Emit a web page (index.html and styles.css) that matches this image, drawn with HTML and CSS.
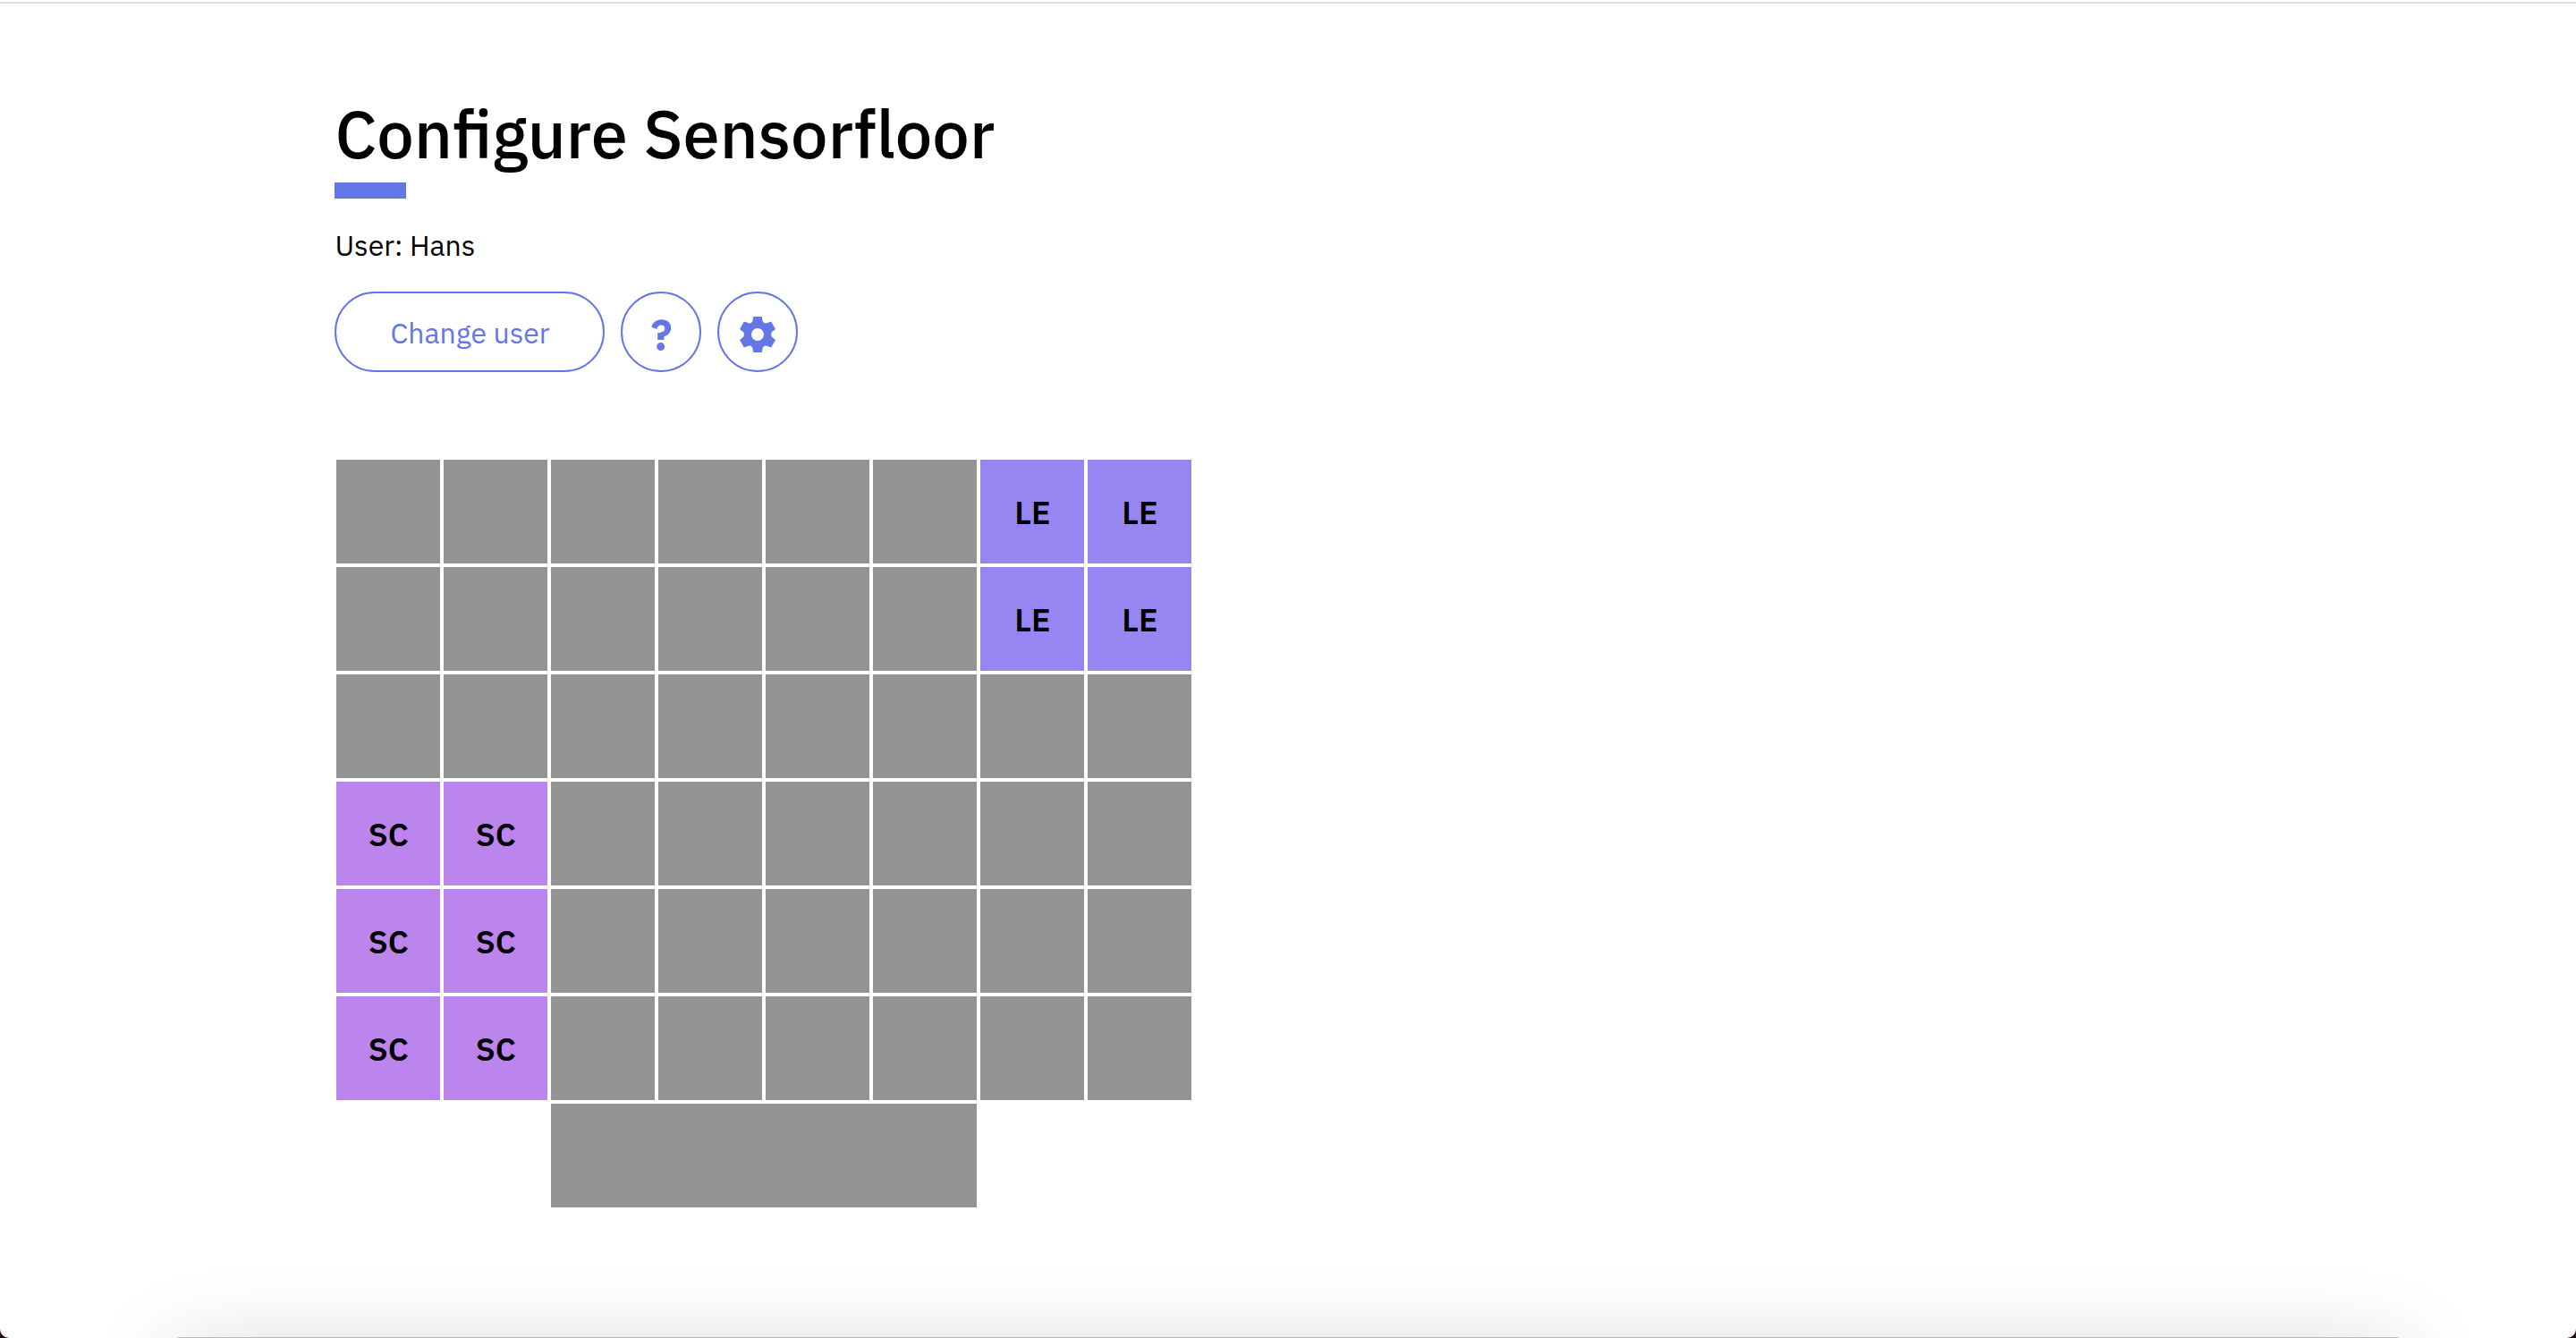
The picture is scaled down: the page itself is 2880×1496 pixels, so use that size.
FILE: index.html
```html
<!DOCTYPE html>
<html lang="en">
<head>
<meta charset="utf-8">
<title>Configure Sensorfloor</title>
<link rel="stylesheet" href="styles.css">
</head>
<body>
<main class="page">
  <h1 class="title">Configure Sensorfloor</h1>
  <p class="user">User: Hans</p>
  <div class="actions">
    <button class="button" type="button">Change user</button>
    <button class="button round" type="button" aria-label="Help">
      <svg class="icon" viewBox="0 0 40 40" aria-hidden="true"><path d="M9.500 11.800C10.500 6.700 14.500 3.200 20.400 3.200C27.200 3.200 31.200 7.100 31.200 12.500C31.200 18.400 27.500 21 23.400 22.300V26H16.200V18.300C20.800 17.700 24.300 16.300 24.300 13.400C24.300 11 22.700 9.500 20.100 9.500C17.600 9.500 16 11.100 15.300 13.900Z"/><circle cx="19.700" cy="33.600" r="4.500"/></svg>
    </button>
    <button class="button round" type="button" aria-label="Settings">
      <svg class="icon" viewBox="0 0 40 40" aria-hidden="true"><path fill-rule="evenodd" d="M15.200 0H24.800L25.800 5.500Q27.500 8 30 7.200L35.200 5.500L40 14L35.700 17.500Q34.500 20 35.700 22.500L40 26L35.200 34.500L30 32.800Q27.500 32 25.800 34.500L24.800 40H15.200L14.200 34.500Q12.500 32 10 32.800L4.800 34.500L0 26L4.300 22.500Q5.500 20 4.300 17.500L0 14L4.800 5.500L10 7.200Q12.500 8 14.200 5.500ZM20 13A7 7 0 1 0 20 27A7 7 0 1 0 20 13Z"/></svg>
    </button>
  </div>
  <div class="floor">
    <i class="cell"></i><i class="cell"></i><i class="cell"></i><i class="cell"></i><i class="cell"></i><i class="cell"></i><b class="cell le">LE</b><b class="cell le">LE</b>
    <i class="cell"></i><i class="cell"></i><i class="cell"></i><i class="cell"></i><i class="cell"></i><i class="cell"></i><b class="cell le">LE</b><b class="cell le">LE</b>
    <i class="cell"></i><i class="cell"></i><i class="cell"></i><i class="cell"></i><i class="cell"></i><i class="cell"></i><i class="cell"></i><i class="cell"></i>
    <b class="cell sc">SC</b><b class="cell sc">SC</b><i class="cell"></i><i class="cell"></i><i class="cell"></i><i class="cell"></i><i class="cell"></i><i class="cell"></i>
    <b class="cell sc">SC</b><b class="cell sc">SC</b><i class="cell"></i><i class="cell"></i><i class="cell"></i><i class="cell"></i><i class="cell"></i><i class="cell"></i>
    <b class="cell sc">SC</b><b class="cell sc">SC</b><i class="cell"></i><i class="cell"></i><i class="cell"></i><i class="cell"></i><i class="cell"></i><i class="cell"></i>
    <i class="cell entrance"></i>
  </div>
</main>
<div class="sheet"></div>
</body>
</html>
```

FILE: styles.css
```css
* { box-sizing: border-box; }
html { background: #1d1014; }
body {
  margin: 0;
  min-height: 100vh;
  position: relative;
  background: #fff;
  border-radius: 0 0 10px 10px;
  color: #000;
  font-family: "IBM Plex Sans", Roboto, sans-serif;
  font-size: 32px;
  line-height: 40px;
}
.page { padding: 100px 13%; }
body::before {
  content: "";
  position: absolute;
  top: 2px;
  left: 0;
  right: 0;
  height: 2px;
  background: #dbdbe3;
}
.title {
  margin: 0;
  font-size: 74px;
  font-weight: 500;
  line-height: 98px;
}
.title::after {
  content: "";
  display: block;
  width: 80px;
  height: 18px;
  margin-top: 6px;
  background: #6577e6;
}
.user { margin: 32px 0; }
.actions { display: flex; gap: 18px; }
.button {
  height: 90px;
  padding: 2px 59px 0 60px;
  border: 2px solid #6577e6;
  border-radius: 45px;
  background: #fff;
  color: #6577e6;
  font: inherit;
}
.round {
  width: 90px;
  padding: 6px 0 0;
  display: grid;
  place-items: center;
}
.icon { width: 40px; height: 40px; fill: currentColor; }
.floor {
  margin-top: 96px;
  padding: 2px;
  display: grid;
  grid-template-columns: repeat(8, 116px);
  grid-auto-rows: 116px;
  gap: 4px;
}
.cell {
  display: grid;
  place-items: center;
  padding-top: 2px;
  background: #949494;
  font-size: 36px;
  font-weight: 600;
}
.le { background: #9785f2; }
.sc { background: #bc85ed; }
.entrance { grid-column: 3 / span 4; }
/* Top edge and shadow of the sheet that waits below the window */
.sheet {
  position: absolute;
  bottom: 0;
  left: 0;
  right: 0;
  height: 120px;
  overflow: hidden;
  border-radius: 0 0 10px 10px;
  pointer-events: none;
}
.sheet::before {
  content: "";
  position: absolute;
  top: calc(100% - 1px);
  left: 192px;
  right: 192px;
  height: 80px;
  border-radius: 10px;
  background: #b8b8b8;
  box-shadow: 0 16px 96px rgba(0, 0, 0, 0.18);
}
```
